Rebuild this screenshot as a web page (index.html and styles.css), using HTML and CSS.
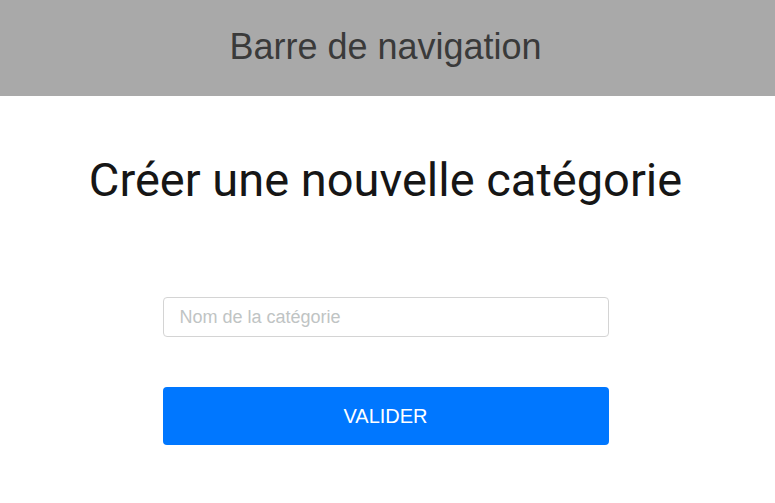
FILE: index.html
```html
<!DOCTYPE html>
<html lang="fr">
<head>
<meta charset="utf-8">
<title>Créer une catégorie</title>
<link rel="stylesheet" href="styles.css">
</head>
<body>
<header class="navbar">Barre de navigation</header>
<main class="content">
  <h1 class="title">Créer une nouvelle catégorie</h1>
  <form class="form">
    <input class="field" type="text" placeholder="Nom de la catégorie">
    <button class="submit" type="button">VALIDER</button>
  </form>
</main>
</body>
</html>
```
FILE: styles.css
```css
* { box-sizing: border-box; }
html, body { margin: 0; padding: 0; background: #fff; }
body { font-family: "Liberation Sans", Arial, sans-serif; }
.navbar {
  height: 96px;
  background: #a9a9a9;
  color: #3a3a3a;
  font-size: 36px;
  display: flex;
  align-items: center;
  justify-content: center;
  padding: 0 4px 2px 0;
}
.content {
  display: flex;
  flex-direction: column;
  align-items: center;
  padding-right: 4px;
}
.title {
  margin: 55px 0 0;
  font-family: Roboto, sans-serif;
  font-weight: 400;
  font-size: 47px;
  line-height: 58px;
  color: #161616;
}
.form {
  width: 446px;
  display: flex;
  flex-direction: column;
  gap: 50px;
  margin-top: 88px;
}
.field {
  height: 40px;
  border: 1px solid #d4d4d4;
  border-radius: 4px;
  padding: 0 16px;
  font-family: "Liberation Sans", Arial, sans-serif;
  font-size: 18px;
  color: #333;
}
.field::placeholder { color: #bfc4c4; }
.submit {
  height: 58px;
  border: 0;
  border-radius: 4px;
  background: #0077ff;
  color: #fff;
  font-family: "Liberation Sans", Arial, sans-serif;
  font-size: 20px;
}
```
